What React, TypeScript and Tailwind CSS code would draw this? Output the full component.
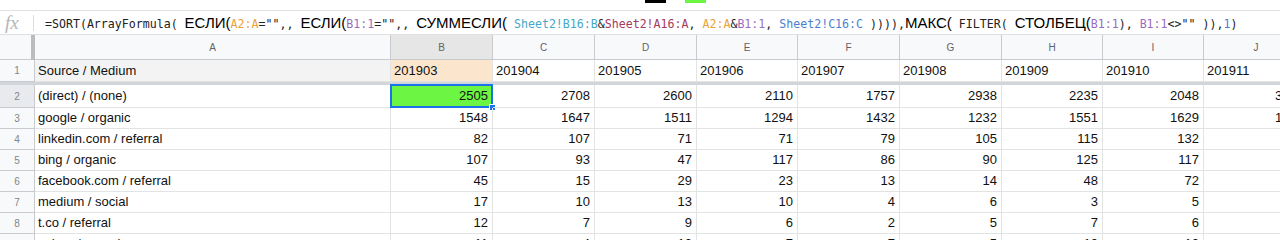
import React from 'react';

// column widths include the right border of each cell
const COLS = [
  { key: 'A', w: 'w-[356px]' },
  { key: 'B', w: 'w-[102px]' },
  { key: 'C', w: 'w-[102px]' },
  { key: 'D', w: 'w-[102px]' },
  { key: 'E', w: 'w-[101px]' },
  { key: 'F', w: 'w-[102px]' },
  { key: 'G', w: 'w-[102px]' },
  { key: 'H', w: 'w-[101px]' },
  { key: 'I', w: 'w-[101px]' },
  { key: 'J', w: 'w-[105px]' },
];

const MONTHS = ['201903', '201904', '201905', '201906', '201907', '201908', '201909', '201910', '201911'];

const ROWS: [string, number[]][] = [
  ['(direct) / (none)', [2505, 2708, 2600, 2110, 1757, 2938, 2235, 2048, 3105]],
  ['google / organic', [1548, 1647, 1511, 1294, 1432, 1232, 1551, 1629, 1702]],
  ['linkedin.com / referral', [82, 107, 71, 71, 79, 105, 115, 132, 98]],
  ['bing / organic', [107, 93, 47, 117, 86, 90, 125, 117, 94]],
  ['facebook.com / referral', [45, 15, 29, 23, 13, 14, 48, 72, 60]],
  ['medium / social', [17, 10, 13, 10, 4, 6, 3, 5, 9]],
  ['t.co / referral', [12, 7, 9, 6, 2, 5, 7, 6, 4]],
  ['yahoo / organic', [11, 4, 10, 7, 7, 5, 10, 10, 8]],
];

const mono = "font-['DejaVu_Sans_Mono',monospace] text-[11.6px]";
const cyr = "font-['Liberation_Sans',Arial,sans-serif] text-[15px] text-black";

function Formula() {
  return (
    <div className={`whitespace-pre leading-none text-[#222] ${mono}`}>
      <span>=SORT(ArrayFormula( </span>
      <span className={cyr}>ЕСЛИ(</span>
      <span className="text-[#e9a23b]">A2:A</span>
      <span>="",, </span>
      <span className={cyr}>ЕСЛИ(</span>
      <span className="text-[#9b6cbc]">B1:1</span>
      <span>="",, </span>
      <span className={cyr}>СУММЕСЛИ(</span>
      <span> </span>
      <span className="text-[#45a8c6]">Sheet2!B16:B</span>
      <span>&amp;</span>
      <span className="text-[#a33a5e]">Sheet2!A16:A</span>
      <span>, </span>
      <span className="text-[#e9a23b]">A2:A</span>
      <span>&amp;</span>
      <span className="text-[#9b6cbc]">B1:1</span>
      <span>, </span>
      <span className="text-[#4a7fd0]">Sheet2!C16:C</span>
      <span> )))),</span>
      <span className={cyr}>МАКС(</span>
      <span> FILTER( </span>
      <span className={cyr}>СТОЛБЕЦ(</span>
      <span className="text-[#9b6cbc]">B1:1</span>
      <span>), </span>
      <span className="text-[#9b6cbc]">B1:1</span>
      <span>&lt;&gt;"" )),</span>
      <span className="text-[#4a7fd0]">1</span>
      <span>)</span>
    </div>
  );
}

function RowHeader({ n, active }: { n: number; active?: boolean }) {
  return (
    <div
      className={`w-[35px] shrink-0 h-full flex items-center justify-center border-r border-b border-[#c8cacd] text-[10px] text-[#80868b] ${
        active ? 'bg-[#e8eaed]' : 'bg-[#f8f9fa]'
      }`}
    >
      {n}
    </div>
  );
}

export default function App() {
  return (
    <div className="w-[1280px] h-[240px] overflow-hidden bg-white font-['Liberation_Sans',Arial,sans-serif] text-[13px] text-[#111]">
      {/* toolbar remnants */}
      <div className="h-[11px] border-b border-[#e0e0e0] flex items-start">
        <div className="ml-[645px] w-[21px] h-[3px] bg-black" />
        <div className="ml-[19px] w-[21px] h-[3px] bg-[#6cf542]" />
      </div>

      {/* formula bar */}
      <div className="h-[24px] border-b border-[#e0e0e0] flex items-center">
        <div className="w-[33px] h-full flex items-center pl-[5px] font-['Liberation_Serif',serif] italic text-[19px] text-[#b5b5b5] leading-none">
          fx
        </div>
        <div className="w-px h-[16px] bg-[#dadce0]" />
        <div className="pl-[11px]">
          <Formula />
        </div>
      </div>

      {/* column headers */}
      <div className="flex h-[25px]">
        <div className="w-[31px] shrink-0 bg-[#f8f9fa] border-b border-[#c8cacd]" />
        <div className="w-[4px] shrink-0 bg-[#bcbcbc]" />
        {COLS.map((c) => (
          <div
            key={c.key}
            className={`${c.w} shrink-0 flex items-center justify-center border-r border-b border-[#c8cacd] text-[10px] text-[#5f6368] ${
              c.key === 'B' ? 'bg-[#e6e6e6]' : 'bg-[#f8f9fa]'
            }`}
          >
            {c.key}
          </div>
        ))}
      </div>

      {/* row 1 (frozen) */}
      <div className="flex h-[22px]">
        <RowHeader n={1} />
        <div className="w-[356px] shrink-0 border-r border-b border-[#e2e3e3] bg-[#f3f3f3] flex items-center pl-[3px]">
          Source / Medium
        </div>
        {MONTHS.map((m, i) => (
          <div
            key={m}
            className={`${COLS[i + 1].w} shrink-0 border-r border-b border-[#e2e3e3] flex items-center pl-[3px] ${
              i === 0 ? 'bg-[#fce5cd]' : 'bg-white'
            }`}
          >
            {m}
          </div>
        ))}
      </div>

      {/* freeze bar */}
      <div className="h-[3px] bg-[#d2d5da]" />

      {/* data rows */}
      {ROWS.map(([label, vals], r) => (
        <div key={label} className={`flex ${r === 0 ? 'h-[23px]' : 'h-[21px]'}`}>
          <RowHeader n={r + 2} active={r === 0} />
          <div className="w-[356px] shrink-0 border-r border-b border-[#e2e3e3] flex items-center pl-[3px] whitespace-nowrap overflow-hidden">
            {label}
          </div>
          {vals.map((v, i) => {
            const selected = r === 0 && i === 0;
            return (
              <div
                key={i}
                className={`${COLS[i + 1].w} shrink-0 border-r border-b border-[#e2e3e3] flex items-center justify-end pr-[4px] relative ${
                  selected ? 'bg-[#6cf542]' : ''
                }`}
              >
                {v}
                {selected && (
                  <>
                    <div className="absolute -inset-px border-2 border-[#1a73e8] pointer-events-none" />
                    <div className="absolute -right-[4px] -bottom-[4px] w-[7px] h-[7px] bg-[#1a73e8] border border-white" />
                  </>
                )}
              </div>
            );
          })}
        </div>
      ))}
    </div>
  );
}
